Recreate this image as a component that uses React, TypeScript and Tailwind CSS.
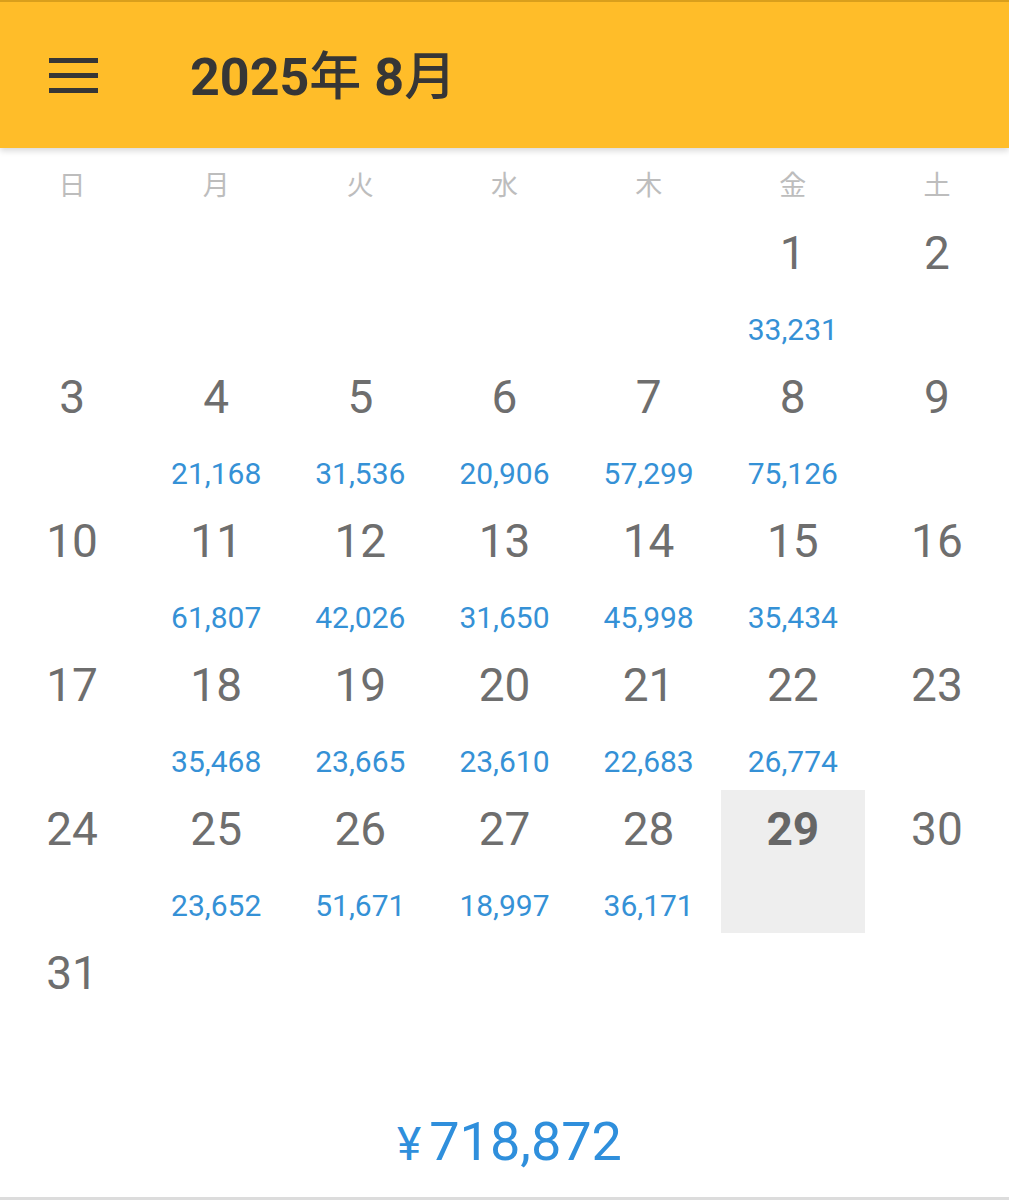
const weekdays = ["日", "月", "火", "水", "木", "金", "土"];

// daily sales for the month, keyed by day
const sales: Record<number, number> = {
  1: 33231,
  4: 21168, 5: 31536, 6: 20906, 7: 57299, 8: 75126,
  11: 61807, 12: 42026, 13: 31650, 14: 45998, 15: 35434,
  18: 35468, 19: 23665, 20: 23610, 21: 22683, 22: 26774,
  25: 23652, 26: 51671, 27: 18997, 28: 36171,
};

const today = 29;
const firstWeekday = 5; // 2025/8/1 is a Friday
const daysInMonth = 31;

function fmt(n: number) {
  return n.toLocaleString("en-US");
}

export default function App() {
  const cells: (number | null)[] = [];
  for (let i = 0; i < firstWeekday; i++) cells.push(null);
  for (let d = 1; d <= daysInMonth; d++) cells.push(d);
  while (cells.length < 42) cells.push(null);

  const total = Object.values(sales).reduce((a, b) => a + b, 0);

  return (
    <div
      className="w-[1009px] h-[1200px] bg-white flex flex-col overflow-hidden"
      style={{ fontFamily: "Roboto, 'Noto Sans CJK JP', sans-serif" }}
    >
      {/* App bar */}
      <header className="relative z-10 h-[148px] shrink-0 bg-[#ffbd29] border-t-2 border-[#d99f1c] shadow-[0_3px_6px_rgba(0,0,0,0.15)] flex items-center">
        <button className="ml-[49px] w-[49px] flex flex-col gap-[10px]">
          <span className="block h-[5px] bg-[#363636]" />
          <span className="block h-[5px] bg-[#363636]" />
          <span className="block h-[5px] bg-[#363636]" />
        </button>
        <h1 className="ml-[92px] mt-[6px] text-[52px] leading-none font-bold text-[#363636]">
          2025<span className="font-medium">年</span> 8<span className="font-medium">月</span>
        </h1>
      </header>

      {/* Weekday labels */}
      <div className="grid grid-cols-7 h-[66px] shrink-0">
        {weekdays.map((w) => (
          <div key={w} className="flex justify-center pt-[22px] text-[27px] leading-[32px] text-[#bdbdbd]">
            {w}
          </div>
        ))}
      </div>

      {/* Day grid */}
      <div className="grid grid-cols-7 grid-rows-[repeat(6,144px)] shrink-0">
        {cells.map((d, i) => (
          <div
            key={i}
            className={`flex flex-col items-center ${d === today ? "bg-[#eeeeee] h-[143px]" : ""}`}
          >
            {d !== null && (
              <>
                <span
                  className={`mt-[11px] text-[46px] leading-[56px] text-[#6e6e6e] ${d === today ? "font-bold text-[#666]" : ""}`}
                >
                  {d}
                </span>
                {sales[d] !== undefined && (
                  <span className="mt-[31px] text-[30px] leading-[36px] text-[#3591d6]">
                    {fmt(sales[d])}
                  </span>
                )}
              </>
            )}
          </div>
        ))}
      </div>

      {/* Month total */}
      <div className="flex justify-center pt-[32px] pl-[10px]">
        <span className="text-[54px] leading-[64px] text-[#2f8fdc]">
          <span className="text-[46px] mr-[8px]">¥</span>
          {fmt(total)}
        </span>
      </div>

      <div className="mt-auto h-[3px] bg-[#dcdcdc]" />
    </div>
  );
}
